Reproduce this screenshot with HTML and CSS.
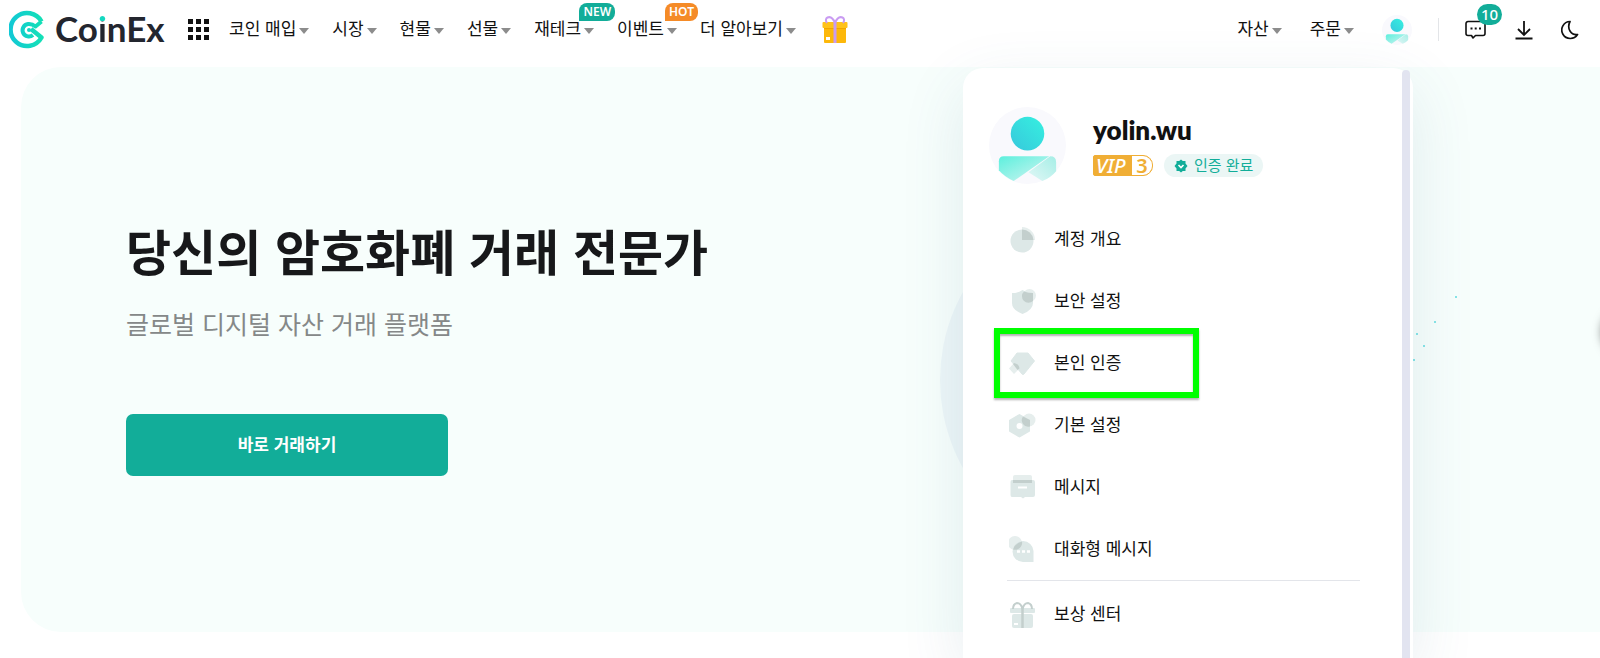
FILE: index.html
```
<!DOCTYPE html>
<html lang="ko">
<head>
    <meta charset="UTF-8">
    <meta name="viewport" content="width=device-width, initial-scale=1.0">
    <title>CoinEx</title>
    <link rel="stylesheet" href="styles.css">
</head>
<body>

<header class="header">
    <a class="logo" href="#" aria-label="CoinEx">
        <svg width="37" height="39" viewBox="0 0 37 39" fill="none">
            <defs>
                <linearGradient id="logoGrad" gradientUnits="userSpaceOnUse" x1="0" y1="0" x2="36" y2="0">
                    <stop offset="0" stop-color="#12c8d6"/>
                    <stop offset="1" stop-color="#14e2b4"/>
                </linearGradient>
            </defs>
            <path d="M32.500 11.500A16.500 16.500 0 1 0 32.500 27.500L22 19" stroke="url(#logoGrad)" stroke-width="4.500" stroke-linejoin="round"/>
            <path d="M32.500 11.500L26.500 16.500Q23 13.500 19 14A6.300 6.300 0 1 0 24 25" stroke="url(#logoGrad)" stroke-width="4" stroke-linejoin="round"/>
            <circle cx="20" cy="20" r="2" fill="#12d5c4"/>
        </svg>
        <span class="logo-text">Co<span class="logo-i">i</span>nEx</span>
    </a>

    <button class="icon-btn apps" aria-label="전체 메뉴">
        <svg width="21" height="21" viewBox="0 0 21 21" fill="#111">
            <path d="M0 0h5v5H0zM8 0h5v5H8zM16 0h5v5h-5zM0 8h5v5H0zM8 8h5v5H8zM16 8h5v5h-5zM0 16h5v5H0zM8 16h5v5H8zM16 16h5v5h-5z"/>
        </svg>
    </button>

    <nav class="nav">
        <a href="#">코인 매입</a>
        <a href="#">시장</a>
        <a href="#">현물</a>
        <a href="#">선물</a>
        <a href="#">재테크<span class="tag tag-new">NEW</span></a>
        <a href="#">이벤트<span class="tag tag-hot">HOT</span></a>
        <a href="#">더 알아보기</a>
    </nav>

    <a class="gift" href="#" aria-label="선물">
        <svg width="26" height="27" viewBox="0 0 26 27" fill="none">
            <rect x="2" y="10" width="22" height="17" rx="1" fill="#fdb80a"/>
            <rect x="0.500" y="6" width="25" height="6" rx="1" fill="#ffc21a"/>
            <rect x="2" y="12" width="22" height="1" fill="#f0a500"/>
            <path d="M13 7C11 2 8 0.500 5.500 1.500C3.500 2.500 3.500 5 5 7M13 7C15 2 18 0.500 20.500 1.500C22.500 2.500 22.500 5 21 7" stroke="#c99bf2" stroke-width="2"/>
            <rect x="11.500" y="6" width="3" height="21" fill="#c99bf2"/>
            <rect x="4" y="21" width="4" height="3" fill="#fff"/>
        </svg>
    </a>

    <nav class="nav nav-right">
        <a href="#">자산</a>
        <a href="#">주문</a>
    </nav>

    <a class="avatar-small" href="#" aria-label="내 계정">
        <svg width="30" height="30" viewBox="0 0 78 78"><use href="#avatar"/></svg>
    </a>
    <span class="divider"></span>

    <div class="tools">
        <button class="icon-btn" aria-label="메시지">
            <svg width="22" height="20" viewBox="0 0 22 20" fill="none" stroke="#111" stroke-width="1.600" stroke-linejoin="round">
                <path d="M3 1.500h15a2 2 0 0 1 2 2v10a2 2 0 0 1-2 2h-7.500L8 18l-1.500-2.500H3a2 2 0 0 1-2-2v-10a2 2 0 0 1 2-2z"/>
                <path d="M5.500 8.500h2M9.700 8.500h2M14 8.500h2" stroke-width="2"/>
            </svg>
            <span class="count">10</span>
        </button>
        <button class="icon-btn" aria-label="다운로드">
            <svg width="18" height="20" viewBox="0 0 18 20" fill="none" stroke="#111" stroke-width="1.800">
                <path d="M9 1v14M3 9l6 6 6-6M0.500 18.500h17"/>
            </svg>
        </button>
        <button class="icon-btn" aria-label="다크 모드">
            <svg width="18" height="20" viewBox="0 0 18 20" fill="none" stroke="#111" stroke-width="1.700" stroke-linejoin="round">
                <path d="M9 1.500A8.500 8.500 0 1 0 16.500 14.500C10 15.500 5.500 8.500 9 1.500z"/>
            </svg>
        </button>
    </div>
</header>

<main class="hero">
    <h1>당신의 암호화폐 거래 전문가</h1>
    <p>글로벌 디지털 자산 거래 플랫폼</p>
    <button class="trade-btn">바로 거래하기</button>
    <svg class="hero-art" width="700" height="565" viewBox="-100 0 700 565" fill="none">
        <circle cx="120" cy="313" r="180" fill="#edf6f8"/>
        <g fill="#62dbe0">
            <circle cx="456" cy="230" r="1"/>
            <circle cx="435" cy="255" r="1"/>
            <circle cx="417" cy="267" r="1"/>
            <circle cx="424" cy="279" r="1"/>
            <circle cx="414" cy="293" r="1"/>
        </g>
    </svg>
    <span class="side-handle"></span>
</main>

<aside class="panel">
    <div class="profile">
        <svg class="avatar" width="77" height="77" viewBox="0 0 78 78">
            <defs>
                <linearGradient id="headGrad" x1="0" y1="1" x2="1" y2="0">
                    <stop offset="0" stop-color="#37c8dc"/>
                    <stop offset="1" stop-color="#36f0e0"/>
                </linearGradient>
                <linearGradient id="bodyGrad" x1="0" y1="0" x2="1" y2="1">
                    <stop offset="0" stop-color="#5cf0dd"/>
                    <stop offset="1" stop-color="#d5f4f2"/>
                </linearGradient>
                <linearGradient id="armGrad" x1="1" y1="0" x2="0" y2="1">
                    <stop offset="0" stop-color="#a5eee6"/>
                    <stop offset="1" stop-color="#e2f7f6"/>
                </linearGradient>
            </defs>
            <g id="avatar">
                <circle cx="39" cy="39" r="39" fill="#f9f9fd"/>
                <circle cx="39" cy="27" r="17" fill="url(#headGrad)"/>
                <path d="M15 50H61L25 75Q15 70 10 64V55Q10 50 15 50z" fill="url(#bodyGrad)"/>
                <path d="M62 50Q68 50 68 56V65Q62 72 54 75L40 66z" fill="url(#armGrad)"/>
            </g>
        </svg>
        <div>
            <div class="name">yolin.wu</div>
            <div class="badges">
                <span class="vip"><i>VIP</i><b>3</b></span>
                <span class="verified">
                    <svg width="14" height="14" viewBox="0 0 14 14">
                        <path d="M7 0.500L8.800 2H11.500V4.500L13.500 7L11.500 9.500V12H8.800L7 13.500L5.200 12H2.500V9.500L0.500 7L2.500 4.500V2H5.200z" fill="#12ad99"/>
                        <path d="M4.500 6l2.500 2.500L9.500 6" stroke="#fff" stroke-width="1.600" fill="none"/>
                    </svg>
                    <span>인증 완료</span>
                </span>
            </div>
        </div>
    </div>

    <ul class="menu">
        <li><a href="#">
            <svg width="28" height="28" viewBox="0 0 28 28">
                <circle cx="13" cy="15" r="11.500" fill="#dde8e7"/>
                <path d="M13 1A13 13 0 0 1 26 14H13z" fill="#e6eeed"/>
                <path d="M13 3.500A11.500 11.500 0 0 1 24.500 14H13z" fill="#c3cfcd"/>
            </svg>계정 개요</a></li>
        <li><a href="#">
            <svg width="28" height="28" viewBox="0 0 28 28">
                <circle cx="20.500" cy="7.500" r="6.500" fill="#e6eeed"/>
                <path d="M13.500 2Q18 5 24 5V15Q24 22 13.500 26Q3 22 3 15V5Q9 5 13.500 2z" fill="#dde8e7"/>
                <path d="M24 5V13A6.500 6.500 0 0 1 15 3.500Q19 5 24 5z" fill="#c3cfcd"/>
            </svg>보안 설정</a></li>
        <li class="marked"><a href="#">
            <svg width="28" height="28" viewBox="0 0 28 28">
                <path d="M8 3H19L25.500 11L15 24Q14 25 13 24L2 11z" fill="#dde8e7" stroke="#dde8e7" stroke-linejoin="round"/>
                <path d="M5 13L10.500 18.500L5 24L0 18.500z" fill="#e6eeed"/>
                <path d="M5 13Q10 14 10.500 18.500L8.500 20L4 14z" fill="#c3cfcd"/>
            </svg>본인 인증</a></li>
        <li><a href="#">
            <svg width="28" height="28" viewBox="0 0 28 28">
                <circle cx="20" cy="8" r="6.500" fill="#e6eeed"/>
                <path d="M10.500 3L20 8.500V19L10.500 24.500L1 19V8.500z" fill="#dde8e7" stroke="#dde8e7" stroke-width="2" stroke-linejoin="round"/>
                <path d="M14 4.500L21 8V14.500A6.500 6.500 0 0 1 14 4.500z" fill="#c3cfcd"/>
                <circle cx="10.500" cy="14" r="3" fill="#fff"/>
            </svg>기본 설정</a></li>
        <li><a href="#">
            <svg width="28" height="28" viewBox="0 0 28 28">
                <rect x="4" y="1" width="19" height="8" rx="2" fill="#e6eeed"/>
                <path d="M3 6H24Q26 6 26 8V21Q26 23 24 23H16L14 24.500L12 23H3Q1.500 23 1.500 21V8Q1.500 6 3 6z" fill="#dde8e7"/>
                <rect x="4" y="6" width="19" height="3" fill="#c3cfcd"/>
                <rect x="9" y="12.500" width="9" height="2" fill="#fff"/>
            </svg>메시지</a></li>
        <li><a href="#">
            <svg width="28" height="28" viewBox="0 0 28 28">
                <circle cx="6" cy="7" r="7" fill="#e6eeed"/>
                <path d="M14 5A10.500 10.500 0 0 1 24.500 15V26H14A10.500 10.500 0 0 1 14 5z" fill="#dde8e7"/>
                <path d="M13 5.500A7 7 0 0 1 4 13.500Q6 7 13 5.500z" fill="#c3cfcd"/>
                <path d="M8 15.500h3M13 15.500h3M18 15.500h3" stroke="#fff" stroke-width="2.500"/>
            </svg>대화형 메시지</a></li>
        <li class="separated"><a href="#">
            <svg width="28" height="28" viewBox="0 0 28 28">
                <rect x="3" y="13" width="21" height="14" rx="2" fill="#dde8e7"/>
                <rect x="1" y="7" width="25" height="5" rx="1" fill="#dde8e7"/>
                <path d="M13.500 8Q12 2 8 2Q4 3 4 8M13.500 8Q15 2 19 2Q23 3 23 8" fill="none" stroke="#c3cfcd" stroke-width="2"/>
                <path d="M13.500 7V27" stroke="#c3cfcd" stroke-width="2.500"/>
                <rect x="5" y="22" width="4" height="2" fill="#fff"/>
            </svg>보상 센터</a></li>
    </ul>
    <span class="scrollbar"></span>
</aside>

</body>
</html>
```
FILE: styles.css
```
*, *::before, *::after {
    box-sizing: border-box;
}
body {
    position: relative;
    min-height: 100vh;
    margin: 0;
    overflow-x: hidden;
    background-color: #fff;
    color: #111;
    font-family: "Noto Sans CJK KR", sans-serif;
    font-size: 17px;
}
a {
    color: inherit;
    text-decoration: none;
}
button {
    border: none;
    padding: 0;
    background: none;
    font: inherit;
    cursor: pointer;
}
svg {
    display: block;
    flex: none;
}

/* header */
.header {
    display: flex;
    align-items: center;
    height: 67px;
    padding: 0 21px 8px 9px;
}
.logo {
    display: flex;
    align-items: center;
    gap: 9px;
    width: 179px;
}
.logo-text {
    padding-bottom: 4px;
    color: #23262f;
    font-family: Lato, sans-serif;
    font-size: 35px;
    font-weight: 700;
    line-height: 40px;
}
.logo-i {
    background: linear-gradient(#14d8c0 14px, #23262f 14px);
    background-clip: text;
    -webkit-background-clip: text;
    color: transparent;
}
.icon-btn {
    position: relative;
}
.apps {
    margin-right: 20px;
}
.nav {
    display: flex;
    gap: 23px;
    padding-bottom: 3px;
    line-height: 24px;
}
.nav a {
    position: relative;
    display: flex;
    align-items: center;
    gap: 3px;
    white-space: nowrap;
}
.nav a::after {
    content: "";
    border: 5px solid transparent;
    border-top: 6px solid #8c8c8c;
    border-bottom: 0;
    margin-top: 5px;
}
.nav-right {
    gap: 28px;
    margin-left: auto;
}
.tag {
    position: absolute;
    top: -13px;
    right: -21px;
    padding: 0 4px;
    border-radius: 8px 8px 8px 0;
    color: #fff;
    font-family: "Noto Sans", sans-serif;
    font-size: 12px;
    font-weight: 600;
    line-height: 18px;
}
.tag-new {
    background-color: #12ad99;
}
.tag-hot {
    background-color: #f58b27;
}
.gift {
    margin-left: 26px;
}
.avatar-small {
    margin-left: 28px;
}
.divider {
    width: 1px;
    height: 23px;
    margin: 0 26px;
    background-color: #e3e5e8;
}
.tools {
    display: flex;
    gap: 28px;
}
.count {
    position: absolute;
    top: -16px;
    left: 12px;
    width: 25px;
    border-radius: 11px;
    background-color: #12ad99;
    color: #fff;
    font-family: "Noto Sans", sans-serif;
    font-size: 15px;
    font-weight: 500;
    line-height: 21px;
}

/* hero */
.hero {
    position: relative;
    height: 565px;
    margin-left: 21px;
    padding: 153px 0 0 105px;
    overflow: hidden;
    border-radius: 40px 0 0 40px;
    background-color: #f7fefc;
}
.hero h1 {
    margin: 0;
    color: #17181a;
    font-size: 49px;
    font-weight: 700;
    line-height: 60px;
}
.hero p {
    margin: 25px 0 73px;
    color: #858888;
    font-size: 25px;
    line-height: 36px;
}
.trade-btn {
    width: 322px;
    height: 62px;
    padding-bottom: 4px;
    border-radius: 7px;
    background-color: #12ad99;
    color: #fff;
    font-weight: 700;
}
.hero-art {
    position: absolute;
    top: 0;
    right: 0;
}
.side-handle {
    position: absolute;
    top: 240px;
    right: -52px;
    width: 50px;
    height: 50px;
    border-radius: 50%;
    box-shadow: 0 0 10px rgba(0, 0, 0, 0.5);
}

/* account panel */
.panel {
    position: absolute;
    top: 68px;
    right: 187px;
    bottom: 0;
    width: 450px;
    padding: 39px 53px 0 26px;
    border-radius: 20px 20px 0 0;
    background-color: #fff;
    box-shadow: 0 20px 64px rgba(60, 110, 130, 0.12);
    clip-path: inset(-68px -100px 0);
}
.profile {
    display: flex;
    gap: 27px;
    height: 101px;
}
.name {
    margin-top: 6px;
    font-family: Lato, sans-serif;
    font-size: 26px;
    font-weight: 800;
    line-height: 34px;
}
.badges {
    display: flex;
    align-items: center;
    gap: 11px;
    margin-top: 7px;
}
.vip {
    display: flex;
    width: 60px;
    height: 21px;
    border: 1px solid #f0ae35;
    border-radius: 2px 10px 10px 2px;
    background-color: #f0ae35;
    color: #fff;
    font-family: "Noto Sans", sans-serif;
    font-size: 20px;
    line-height: 19px;
}
.vip i {
    width: 38px;
    padding-left: 2px;
    font-weight: 500;
}
.vip b {
    flex: 1;
    border-radius: 0 9px 9px 0;
    background-color: #fff;
    color: #f0ae35;
    font-weight: 600;
    text-align: center;
}
.verified {
    display: flex;
    align-items: center;
    gap: 6px;
    height: 23px;
    padding: 0 10px;
    border-radius: 12px;
    background-color: #ebf6f5;
    color: #12ad99;
    font-size: 15px;
}
.verified span {
    padding-bottom: 3px;
}
.menu {
    margin: 0;
    padding: 0 0 0 18px;
    list-style: none;
}
.menu li {
    position: relative;
}
.menu a {
    display: flex;
    align-items: center;
    gap: 17px;
    height: 62px;
    padding: 0 0 4px 2px;
}
.menu svg {
    margin-top: 6px;
}
.marked::after {
    content: "";
    position: absolute;
    inset: -4px auto -4px -13px;
    width: 205px;
    border: 6px solid #00ff00;
    box-shadow: 0 2px 2px rgba(0, 0, 0, 0.3), inset 0 2px 2px rgba(0, 0, 0, 0.3);
}
.menu .separated {
    padding-top: 2px;
    border-top: 1px solid #e3e5ea;
}
.scrollbar {
    position: absolute;
    top: 2px;
    right: 3px;
    bottom: 0;
    width: 8px;
    border-radius: 4px 4px 0 0;
    background-color: #e2e4f0;
}
```
